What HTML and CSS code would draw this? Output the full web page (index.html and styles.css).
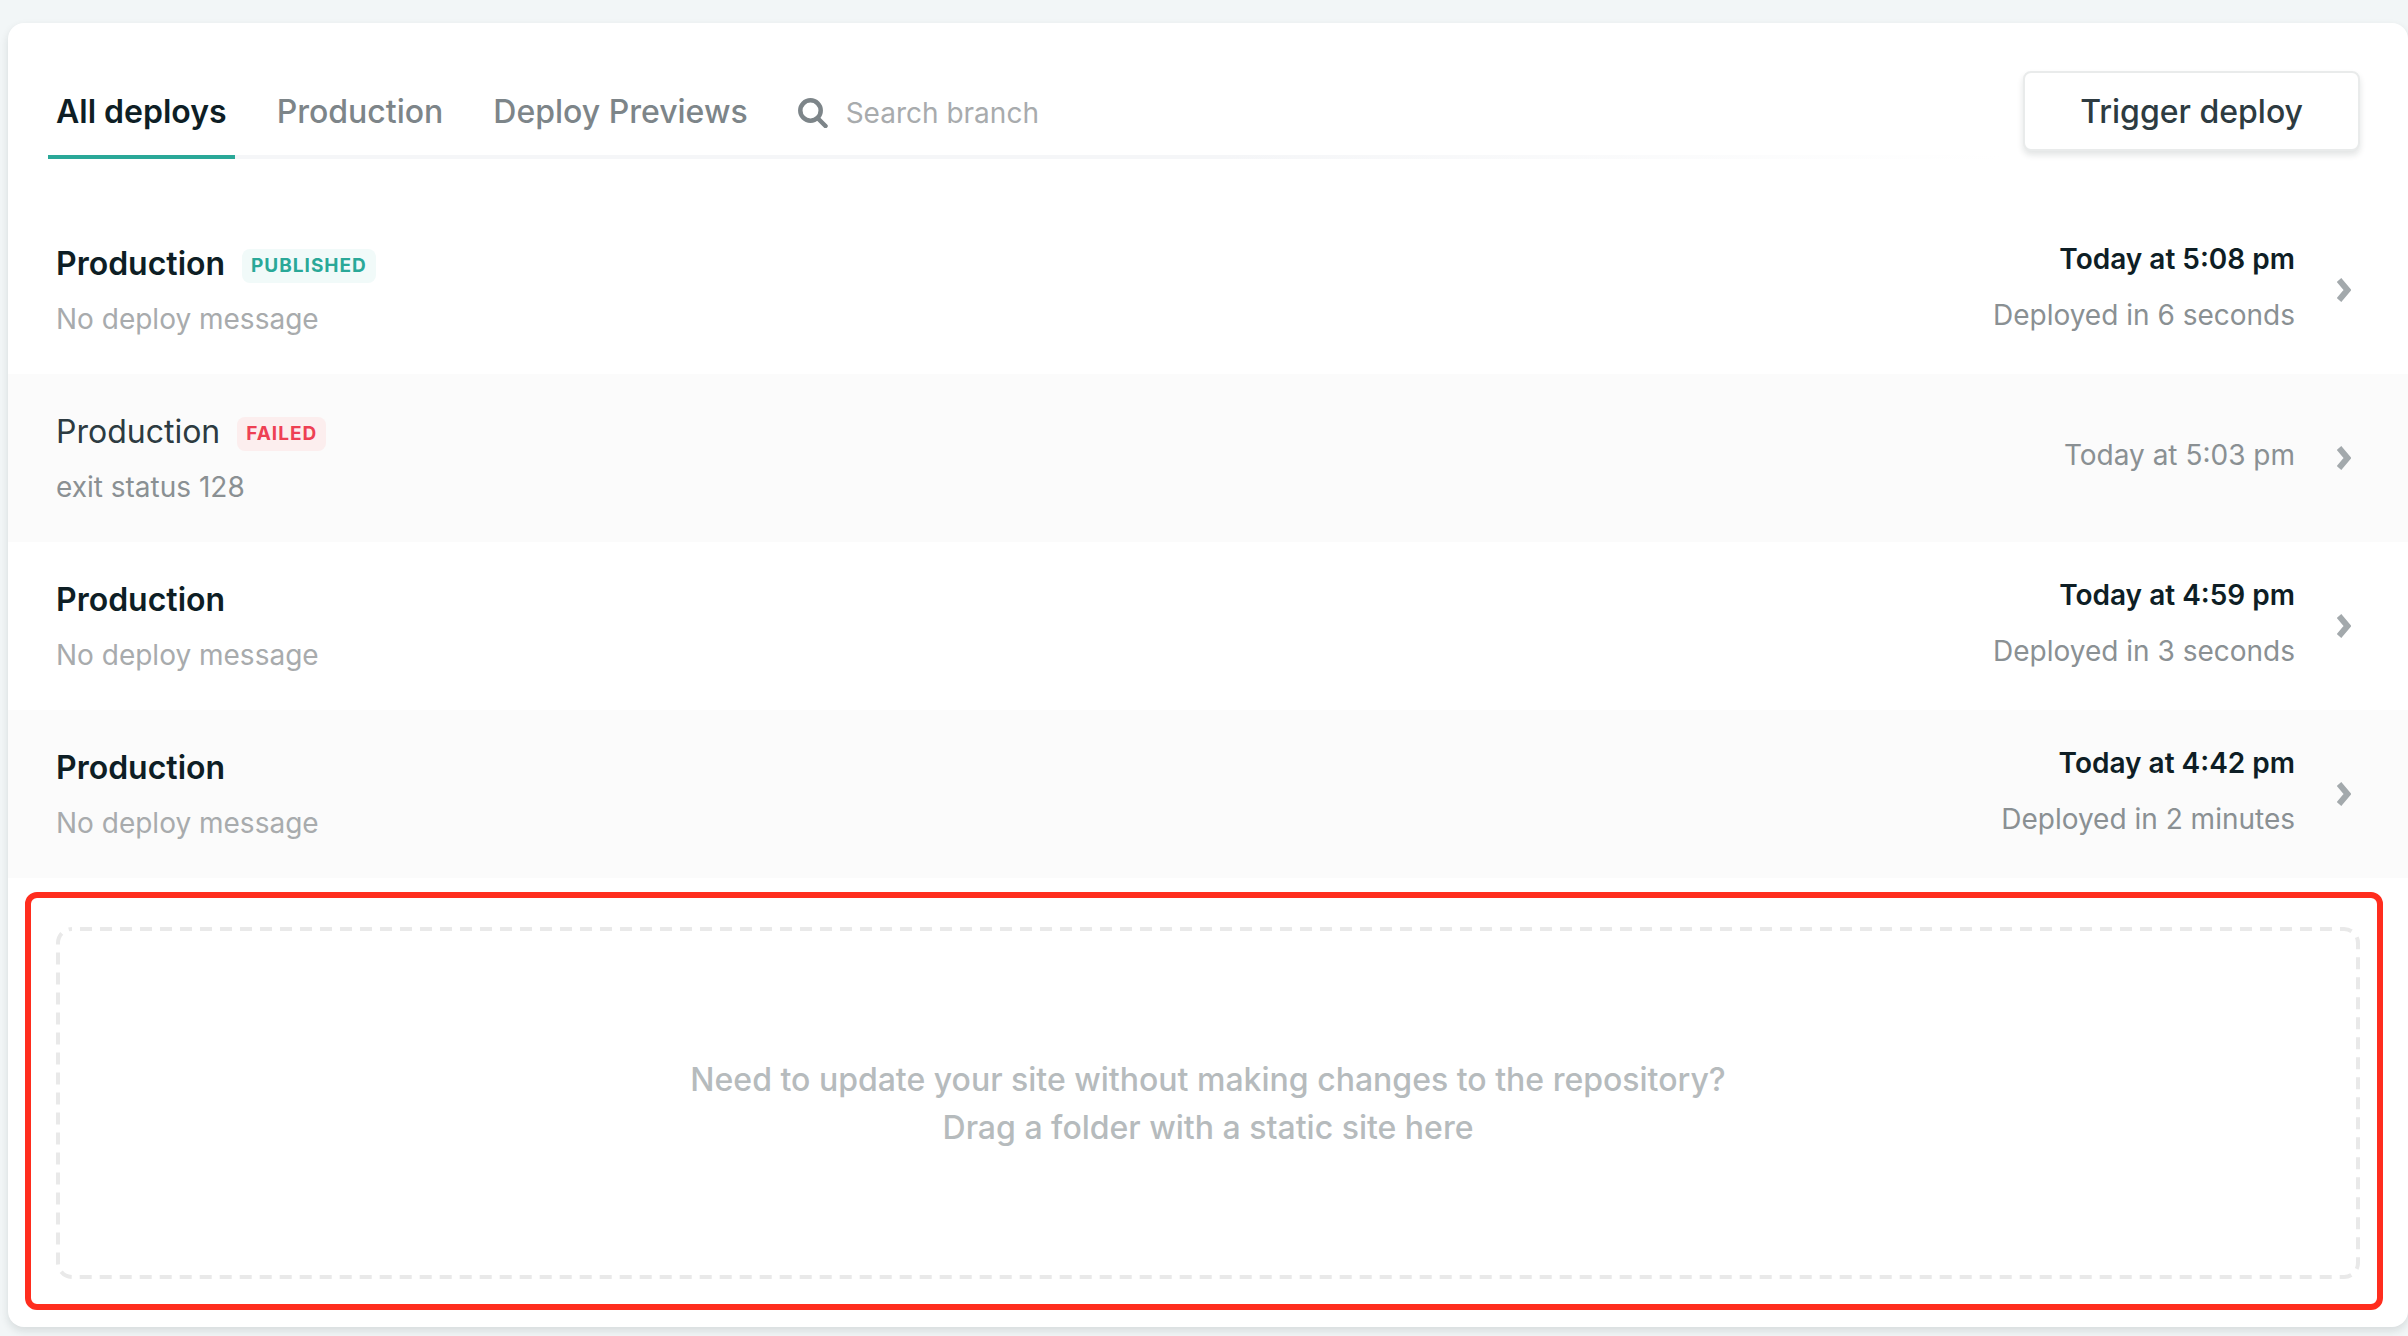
FILE: index.html
```html
<!DOCTYPE html>
<html lang="en">
<head>
  <meta charset="utf-8">
  <title>Deploys</title>
  <link rel="stylesheet" href="styles.css">
</head>
<body>
  <main class="card">
    <header class="toolbar">
      <nav class="tabs">
        <a class="tab tab-active" href="#all">All deploys</a>
        <a class="tab" href="#production">Production</a>
        <a class="tab" href="#previews">Deploy Previews</a>
        <label class="search">
          <svg class="search-icon" viewBox="0 0 30 30" aria-hidden="true"><circle cx="12.500" cy="12.500" r="10.200"/><path d="M20 20.500 L27.500 28"/></svg>
          <input class="search-input" type="text" placeholder="Search branch" aria-label="Search branch">
        </label>
      </nav>
      <button class="trigger" type="button">Trigger deploy</button>
    </header>

    <ul class="deploys">
      <li>
        <a class="deploy" href="#deploy-4">
          <div class="info">
            <div class="title-line"><span class="title">Production</span><span class="badge badge-published">PUBLISHED</span></div>
            <div class="message">No deploy message</div>
          </div>
          <div class="timing">
            <div class="time">Today at 5:08 pm</div>
            <div class="duration">Deployed in 6 seconds</div>
          </div>
          <svg class="chevron" viewBox="0 0 14 24" aria-hidden="true"><path d="M2 2 L10.500 12 L2 22"/></svg>
        </a>
      </li>
      <li>
        <a class="deploy deploy-failed" href="#deploy-3">
          <div class="info">
            <div class="title-line"><span class="title">Production</span><span class="badge badge-failed">FAILED</span></div>
            <div class="message">exit status 128</div>
          </div>
          <div class="timing">
            <div class="time">Today at 5:03 pm</div>
          </div>
          <svg class="chevron" viewBox="0 0 14 24" aria-hidden="true"><path d="M2 2 L10.500 12 L2 22"/></svg>
        </a>
      </li>
      <li>
        <a class="deploy" href="#deploy-2">
          <div class="info">
            <div class="title-line"><span class="title">Production</span></div>
            <div class="message">No deploy message</div>
          </div>
          <div class="timing">
            <div class="time">Today at 4:59 pm</div>
            <div class="duration">Deployed in 3 seconds</div>
          </div>
          <svg class="chevron" viewBox="0 0 14 24" aria-hidden="true"><path d="M2 2 L10.500 12 L2 22"/></svg>
        </a>
      </li>
      <li>
        <a class="deploy" href="#deploy-1">
          <div class="info">
            <div class="title-line"><span class="title">Production</span></div>
            <div class="message">No deploy message</div>
          </div>
          <div class="timing">
            <div class="time">Today at 4:42 pm</div>
            <div class="duration">Deployed in 2 minutes</div>
          </div>
          <svg class="chevron" viewBox="0 0 14 24" aria-hidden="true"><path d="M2 2 L10.500 12 L2 22"/></svg>
        </a>
      </li>
    </ul>

    <section class="highlight">
      <div class="dropzone">
        <svg class="dropzone-outline" aria-hidden="true"><rect/></svg>
        <p class="dropzone-text">Need to update your site without making changes to the repository?<br>Drag a folder with a static site here</p>
      </div>
    </section>
  </main>
</body>
</html>
```
FILE: styles.css
```css
* {
  box-sizing: border-box;
}

body {
  margin: 0;
  padding: 23px 0 9px 8px;
  background: #f2f6f7;
  color: #0e1e25;
  font-family: Inter, "Liberation Sans", sans-serif;
  font-size: 28px;
}

a {
  color: inherit;
  text-decoration: none;
}

.card {
  padding: 40px 0 17px;
  background: #fff;
  border-radius: 16px;
  box-shadow: 0 4px 8px rgba(14, 30, 37, 0.12);
}

/* Tabs, search and the main action */
.toolbar {
  display: flex;
  align-items: center;
  gap: 20px;
  padding: 0 48px 0 40px;
  margin-bottom: 47px;
}

.tabs {
  display: flex;
  flex: 1;
  gap: 34px;
  height: 96px;
  background: linear-gradient(to right, #f5f6f8 60%, #fff) bottom / 100% 4px no-repeat;
}

.tab {
  padding: 0 8px;
  border-bottom: 4px solid transparent;
  color: #7d8589;
  font-size: 32px;
  font-weight: 500;
  line-height: 98px;
  white-space: nowrap;
}

.tab-active {
  border-bottom-color: #2aa898;
  color: #0e1e25;
  font-weight: 600;
}

.search {
  display: flex;
  flex: 1;
  align-items: center;
  gap: 18px;
  padding: 4px 0 0 8px;
}

.search-icon {
  flex: none;
  width: 30px;
  height: 30px;
  fill: none;
  stroke: #7d8589;
  stroke-width: 4.5;
  stroke-linecap: round;
}

.search-input {
  flex: 1;
  min-width: 0;
  padding: 0;
  border: 0;
  background: none;
  color: #0e1e25;
  font: inherit;
  outline: none;
}

.search-input::placeholder {
  color: #a8abad;
  opacity: 1;
}

.trigger {
  height: 80px;
  padding: 0 55px;
  border: 2px solid #e9ebeb;
  border-radius: 8px;
  background: #fff;
  box-shadow: 0 4px 6px rgba(14, 30, 37, 0.12);
  color: #2d3b41;
  font: inherit;
  font-size: 32px;
  font-weight: 500;
  white-space: nowrap;
}

/* Deploy list */
.deploys {
  margin: 0;
  padding: 0;
  list-style: none;
}

.deploys li:nth-child(even) {
  background: #fbfbfb;
}

.deploy {
  display: flex;
  align-items: center;
  min-height: 168px;
  padding: 0 57px 0 48px;
}

.info {
  flex: 1;
}

.title-line {
  display: flex;
  align-items: center;
  gap: 17px;
  margin-bottom: 8px;
  line-height: 50px;
}

.title {
  font-size: 32px;
  font-weight: 600;
}

.message {
  color: #a8abad;
  line-height: 44px;
}

.badge {
  margin-top: 4px;
  padding: 0 9px;
  border-radius: 8px;
  font-size: 19px;
  font-weight: 700;
  letter-spacing: 1px;
  line-height: 34px;
}

.badge-published {
  background: #f1faf9;
  color: #2aa898;
}

.badge-failed {
  background: #fceeee;
  color: #ee4053;
}

.timing {
  display: flex;
  flex-direction: column;
  gap: 14px;
  padding-bottom: 6px;
  line-height: 42px;
  text-align: right;
}

.time {
  font-weight: 600;
}

.duration {
  color: #8a9093;
}

.deploy-failed .title {
  color: #2d3b41;
  font-weight: 400;
}

.deploy-failed .message,
.deploy-failed .time {
  color: #8a9093;
  font-weight: 400;
}

.chevron {
  flex: none;
  width: 14px;
  height: 24px;
  margin-left: 42px;
  fill: none;
  stroke: #a3a9ac;
  stroke-width: 6;
}

/* Drag and drop area */
.highlight {
  margin: 14px 25px 0 17px;
  padding: 29px 17px 25px 25px;
  border: 6px solid #ff2d1e;
  border-radius: 12px;
}

.dropzone {
  position: relative;
  display: flex;
  align-items: center;
  justify-content: center;
  min-height: 352px;
}

.dropzone-outline {
  position: absolute;
  inset: 0;
  width: 100%;
  height: 100%;
}

.dropzone-outline rect {
  x: 2px;
  y: 2px;
  width: calc(100% - 4px);
  height: calc(100% - 4px);
  rx: 14px;
  fill: none;
  stroke: #e9e9e9;
  stroke-width: 4px;
  stroke-dasharray: 12 8;
  stroke-dashoffset: 12px;
}

.dropzone-text {
  margin: 0;
  padding-top: 2px;
  color: #b6bbbd;
  font-size: 32px;
  font-weight: 500;
  line-height: 48px;
  text-align: center;
}
```
